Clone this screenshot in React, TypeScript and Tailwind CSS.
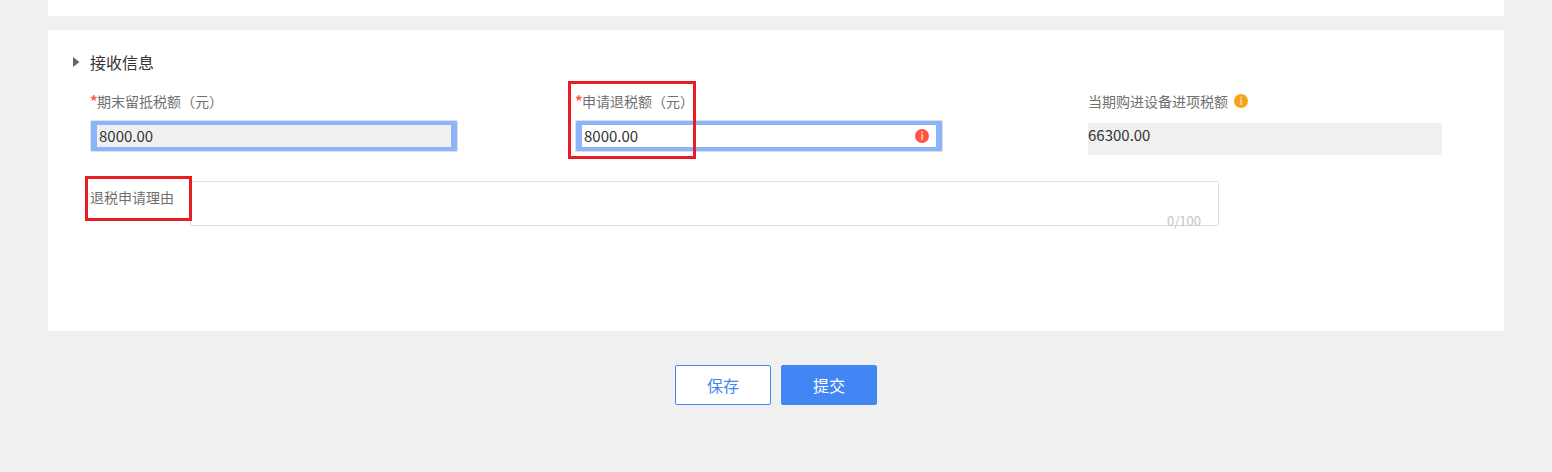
import React from "react";

const fontStack = "font-['Noto_Sans_CJK_SC','Noto_Sans',sans-serif]";

const RedMark = ({ className }: { className: string }) => (
  <div className={`pointer-events-none absolute border-[3px] border-[#e81c24] ${className}`} />
);

const Dot = ({ color }: { color: string }) => (
  <span className={`flex h-[14px] w-[14px] items-center justify-center rounded-full text-[10px] leading-none text-white ${color}`}>
    i
  </span>
);

const FieldLabel = ({ children, required }: { children: React.ReactNode; required?: boolean }) => (
  <div className="flex h-[20px] items-center text-[14px] leading-[20px] text-[#707070]">
    {required && <span className="w-[7px] text-[15px] font-bold text-[#ff5540]">*</span>}
    {children}
  </div>
);

const App = () => {
  return (
    <div className={`relative flex h-[472px] w-[1552px] flex-col overflow-hidden bg-[#f0f0f0] px-[48px] ${fontStack}`}>
      <div className="h-[16px] bg-white" />

      {/* 接收信息 */}
      <div className="mt-[14px] h-[301px] bg-white pl-[25px] pt-[20px]">
        <div className="flex h-[24px] items-center">
          <svg width="7" height="10" viewBox="0 0 7 10" className="mr-[10px]">
            <path d="M0 0 L6.5 5 L0 10 Z" fill="#666666" />
          </svg>
          <span className="text-[16px] leading-[24px] text-[#333333]">接收信息</span>
        </div>

        <div className="mt-[17px] flex pl-[17px]">
          <div className="w-[368px]">
            <FieldLabel required>期末留抵税额（元）</FieldLabel>
            <div className="mt-[9px] h-[32px] rounded-[2px] border border-[#dcdfe6] bg-[#8cb4f8] px-[6px] py-[4px]">
              <div className="flex h-[22px] items-center bg-[#f0f0f0] pl-[2px] text-[15px] text-[#333333]">8000.00</div>
            </div>
          </div>

          <div className="ml-[117px] w-[368px]">
            <FieldLabel required>申请退税额（元）</FieldLabel>
            <div className="mt-[9px] h-[32px] rounded-[2px] border border-[#dcdfe6] bg-[#8cb4f8] px-[6px] py-[4px]">
              <div className="flex h-[22px] items-center justify-between bg-white pl-[2px] pr-[7px] text-[15px] text-[#333333]">
                8000.00
                <Dot color="bg-[#ff5540]" />
              </div>
            </div>
          </div>

          <div className="ml-[145px] w-[354px]">
            <div className="flex h-[20px] items-center gap-[6px] text-[14px] text-[#707070]">
              当期购进设备进项税额
              <Dot color="bg-[#f9a11b]" />
            </div>
            <div className="mt-[12px] h-[32px] bg-[#f0f0f0] text-[15px] leading-[24px] text-[#333333]">66300.00</div>
          </div>
        </div>

        <div className="mt-[26px] flex pl-[17px]">
          <div className="w-[100px] pt-[6px] text-[14px] leading-[20px] text-[#707070]">退税申请理由</div>
          <div className="relative h-[45px] w-[1029px] rounded-[2px] border border-[#dcdfe6] bg-white">
            <span className="absolute bottom-[-4px] right-[17px] text-[13px] leading-[16px] text-[#c4c4c4]">0/100</span>
          </div>
        </div>
      </div>

      <div className="mt-[34px] flex justify-center gap-[10px]">
        <button className="h-[40px] w-[96px] rounded-[2px] border border-[#4285f4] bg-white text-[16px] text-[#4285f4]">保存</button>
        <button className="h-[40px] w-[96px] rounded-[2px] bg-[#4285f4] text-[16px] text-white">提交</button>
      </div>

      <RedMark className="left-[568px] top-[81px] h-[78px] w-[128px]" />
      <RedMark className="left-[85px] top-[176px] h-[45px] w-[107px]" />
    </div>
  );
};

export default App;
